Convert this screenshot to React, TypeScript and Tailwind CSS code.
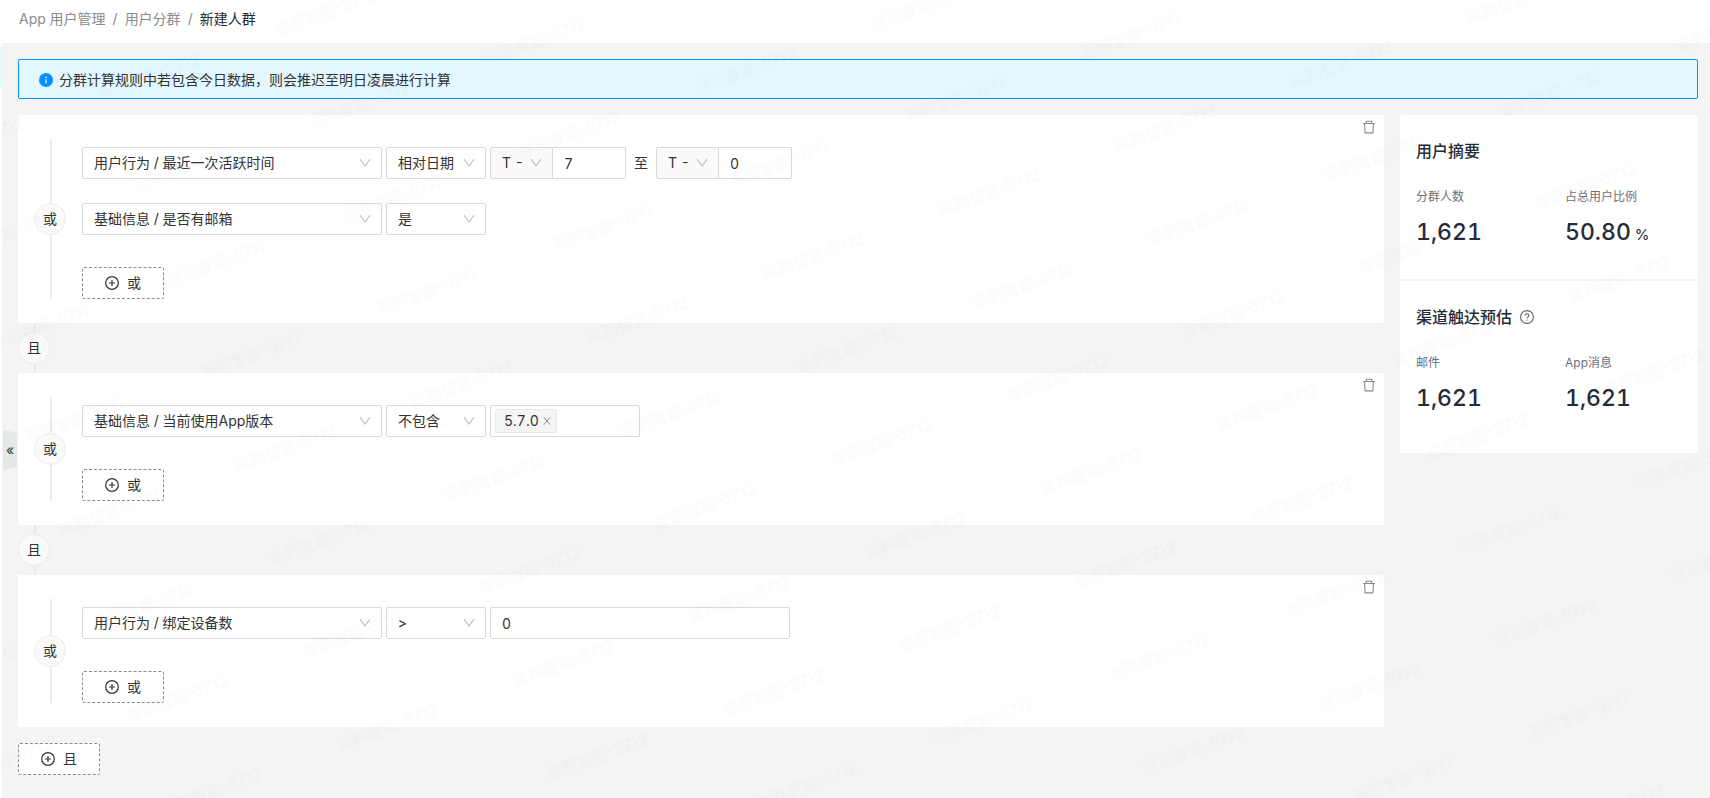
import type { ReactNode } from 'react';

type Field =
  | { kind: 'range'; from: string; to: string }
  | { kind: 'tags'; tags: string[] }
  | { kind: 'number'; value: string }
  | { kind: 'none' };

interface Rule {
  id: string;
  attribute: string;
  operator: string;
  field: Field;
}

const groups: { id: string; rules: Rule[] }[] = [
  {
    id: 'g1',
    rules: [
      { id: 'active', attribute: '用户行为 / 最近一次活跃时间', operator: '相对日期', field: { kind: 'range', from: '7', to: '0' } },
      { id: 'email', attribute: '基础信息 / 是否有邮箱', operator: '是', field: { kind: 'none' } },
    ],
  },
  {
    id: 'g2',
    rules: [
      { id: 'version', attribute: '基础信息 / 当前使用App版本', operator: '不包含', field: { kind: 'tags', tags: ['5.7.0'] } },
    ],
  },
  {
    id: 'g3',
    rules: [
      { id: 'devices', attribute: '用户行为 / 绑定设备数', operator: '>', field: { kind: 'number', value: '0' } },
    ],
  },
];

function ChevronIcon() {
  return (
    <svg className="h-3 w-3" viewBox="0 0 12 12" fill="none" stroke="#bfbfbf" strokeWidth="1.1">
      <path d="M1 2.2 6 9l5-6.8" />
    </svg>
  );
}

function PlusCircleIcon() {
  return (
    <svg className="h-3.5 w-3.5" viewBox="0 0 14 14" fill="none" stroke="#333" strokeWidth="1.2">
      <circle cx="7" cy="7" r="6.3" />
      <path d="M4 7h6M7 4v6" />
    </svg>
  );
}

function TrashIcon() {
  return (
    <svg className="h-3.5 w-3.5" viewBox="0 0 14 14" fill="none" stroke="#8c8c8c" strokeWidth="1.1">
      <path d="M1 3.5h12M4.2 3.3V1.2h5.6v2.1M2.6 3.7l.5 9.2h7.8l.5-9.2" />
    </svg>
  );
}

function InfoIcon() {
  return (
    <svg className="h-3.5 w-3.5" viewBox="0 0 14 14">
      <circle cx="7" cy="7" r="7" fill="#0a8fff" />
      <circle cx="7" cy="4.2" r=".8" fill="#fff" />
      <path d="M7 6.2v4.3" stroke="#fff" strokeWidth="1.1" />
    </svg>
  );
}

function QuestionIcon() {
  return (
    <svg className="h-3.5 w-3.5" viewBox="0 0 14 14" fill="none" stroke="#5f636b" strokeWidth="1.1">
      <circle cx="7" cy="7" r="6.4" />
      <path d="M5 5.6C5 4.4 5.8 3.8 7 3.8s2 .7 2 1.7c0 1.3-2 1.4-2 2.8" />
      <path d="M7 9.4v1.2" />
    </svg>
  );
}

function Select({ label, value, className }: { label: string; value: string; className: string }) {
  return (
    <div className={`relative h-8 rounded-xs border border-[#d9d9d9] ${className}`}>
      <select aria-label={label} defaultValue={value} className="h-full w-full appearance-none bg-transparent px-[11px] outline-none">
        <option>{value}</option>
      </select>
      <span className="pointer-events-none absolute inset-y-0 right-2.5 flex items-center">
        <ChevronIcon />
      </span>
    </div>
  );
}

function DayInput({ label, value }: { label: string; value: string }) {
  return (
    <div className="flex">
      <Select label={`${label}基准`} value="T -" className="w-[63px] rounded-r-none bg-[#fafafa]" />
      <input
        aria-label={label}
        defaultValue={value}
        className="h-8 w-[73px] rounded-r-xs border border-l-0 border-[#d9d9d9] bg-transparent px-[11px] outline-none"
      />
    </div>
  );
}

function RuleField({ field }: { field: Field }) {
  if (field.kind === 'range') {
    return (
      <div className="flex items-center gap-2">
        <DayInput label="开始" value={field.from} />
        <span>至</span>
        <DayInput label="结束" value={field.to} />
      </div>
    );
  }

  if (field.kind === 'tags') {
    return (
      <div className="flex h-8 w-[150px] items-center gap-1 rounded-xs border border-[#d9d9d9] px-1">
        {field.tags.map((tag) => (
          <span key={tag} className="flex h-6 items-center gap-1 rounded-xs border border-[#e8e8e8] bg-[#f5f5f5] pl-2 pr-[5px]">
            {tag}
            <button type="button" aria-label={`移除 ${tag}`}>
              <svg className="h-2 w-2" viewBox="0 0 8 8" stroke="#8c8c8c" strokeWidth="1">
                <path d="M.8.3l6.4 7.4M7.2.3l-6.4 7.4" />
              </svg>
            </button>
          </span>
        ))}
        <input aria-label="版本" className="min-w-0 flex-1 outline-none" />
      </div>
    );
  }

  if (field.kind === 'number') {
    return (
      <input
        aria-label="数量"
        defaultValue={field.value}
        className="h-8 w-[300px] rounded-xs border border-[#d9d9d9] px-[11px] outline-none"
      />
    );
  }

  return null;
}

function AddButton({ children }: { children: ReactNode }) {
  return (
    <button type="button" className="flex h-8 w-[82px] items-center justify-center gap-2 rounded-xs border border-dashed border-[#8c8c8c] bg-white">
      <PlusCircleIcon />
      {children}
    </button>
  );
}

function Joint({ children }: { children: ReactNode }) {
  return (
    <span className="flex h-8 w-8 shrink-0 items-center justify-center rounded-full border border-[#ececec] bg-[#fafafa]">
      {children}
    </span>
  );
}

function RuleGroup({ rules }: { rules: Rule[] }) {
  return (
    <section className="flex items-start rounded-xs bg-white py-6 pl-4">
      <div className="flex w-8 flex-col items-center self-stretch">
        <span className="ml-0.5 w-0.5 flex-1 bg-[#ececec]" />
        <Joint>或</Joint>
        <span className="ml-0.5 w-0.5 flex-1 bg-[#ececec]" />
      </div>
      <div className="ml-4 flex-1 pt-2">
        <div className="mb-8 flex flex-col gap-6">
          {rules.map((rule) => (
            <div key={rule.id} className="flex gap-1">
              <Select label="属性" value={rule.attribute} className="w-[300px]" />
              <Select label="条件" value={rule.operator} className="w-[100px]" />
              <RuleField field={rule.field} />
            </div>
          ))}
        </div>
        <AddButton>或</AddButton>
      </div>
      <button type="button" aria-label="删除" className="-mt-[19px] mr-2">
        <TrashIcon />
      </button>
    </section>
  );
}

function Connector() {
  return (
    <div className="flex h-[50px] w-8 flex-col items-center">
      <span className="ml-0.5 w-0.5 flex-1 bg-[#e8e8e8]" />
      <Joint>且</Joint>
      <span className="ml-0.5 w-0.5 flex-1 bg-[#e8e8e8]" />
    </div>
  );
}

function Stat({ label, value, unit }: { label: string; value: string; unit?: string }) {
  return (
    <div className="flex-1">
      <dt className="text-xs leading-5 text-[#6b6f78]">{label}</dt>
      <dd className="mt-2 mb-0.5 text-[23px] leading-[34px] font-medium text-[#262b38]">
        {value}
        {unit && <span className="ml-1 text-[15px] leading-none font-normal">{unit}</span>}
      </dd>
    </div>
  );
}

// slanted grid of marks, only those that touch the visible area
function Watermark() {
  const marks: { x: number; y: number }[] = [];
  for (let col = -3; col < 14; col++) {
    for (let row = -8; row < 14; row++) {
      const x = 217 + col * 210 + row * 34;
      const y = 262 + col * 29 + row * 93;
      if (x > -45 && x < 1750 && y > -15 && y < 812) marks.push({ x, y });
    }
  }
  return (
    <svg aria-hidden="true" className="pointer-events-none absolute inset-0 h-full w-full fill-black text-base proportional-nums opacity-[0.016]">
      {marks.map(({ x, y }) => (
        <text key={`${x},${y}`} textAnchor="middle" dominantBaseline="central" transform={`translate(${x} ${y}) rotate(-20)`}>
          涂鸦智能-5712
        </text>
      ))}
    </svg>
  );
}

export default function App() {
  return (
    <div className="relative flex min-h-screen overflow-hidden bg-[#f4f4f4] font-[Inter,'Noto_Sans_CJK_SC',sans-serif] text-sm text-[#333] tabular-nums">
      <aside className="w-0.5 shrink-0 bg-white pt-[47px]">
        <div className="h-10 bg-[#e3f7ff]" />
      </aside>

      <div className="min-w-0 flex-1">
        <header className="h-[43px] bg-white pl-[17px]">
          <nav aria-label="面包屑" className="flex h-[38px] items-center gap-[7px] text-[#8c8c8c]">
            <a href="#users">App 用户管理</a>
            <span>/</span>
            <a href="#groups">用户分群</a>
            <span>/</span>
            <span className="text-[#262626]">新建人群</span>
          </nav>
        </header>

        <main className="py-4 pl-4 pr-3">
          <div role="alert" className="flex h-10 items-center gap-1.5 rounded-xs border border-[#0a8fff] bg-[#e3f7ff] px-5 pt-0.5">
            <InfoIcon />
            分群计算规则中若包含今日数据，则会推迟至明日凌晨进行计算
          </div>

          <div className="mt-4 flex items-start gap-4">
            <div className="min-w-0 flex-1">
              {groups.map((group, index) => (
                <div key={group.id}>
                  {index > 0 && <Connector />}
                  <RuleGroup rules={group.rules} />
                </div>
              ))}
              <div className="mt-4">
                <AddButton>且</AddButton>
              </div>
            </div>

            <aside className="w-[298px] shrink-0 rounded-t-sm bg-white text-[#262b38]">
              <section className="border-b-2 border-[#f4f4f4] pt-6 pb-7 pl-4">
                <h2 className="text-base font-medium">用户摘要</h2>
                <dl className="mt-6 -ml-4 grid grid-cols-2 *:pl-4">
                  <Stat label="分群人数" value="1,621" />
                  <Stat label="占总用户比例" value="50.80" unit="%" />
                </dl>
              </section>
              <section className="pt-6 pb-9 pl-4">
                <h2 className="flex items-center gap-2 text-base font-medium">
                  渠道触达预估
                  <QuestionIcon />
                </h2>
                <dl className="mt-6 -ml-4 grid grid-cols-2 *:pl-4">
                  <Stat label="邮件" value="1,621" />
                  <Stat label="App消息" value="1,621" />
                </dl>
              </section>
            </aside>
          </div>
        </main>
      </div>

      <button
        type="button"
        aria-label="收起菜单"
        className="absolute top-[430px] left-[3px] h-10 w-3.5 rounded-r-sm bg-[#e4e8e8] leading-none [clip-path:polygon(0_0,100%_6%,100%_94%,0_100%)]"
      >
        «
      </button>
      <Watermark />
    </div>
  );
}
